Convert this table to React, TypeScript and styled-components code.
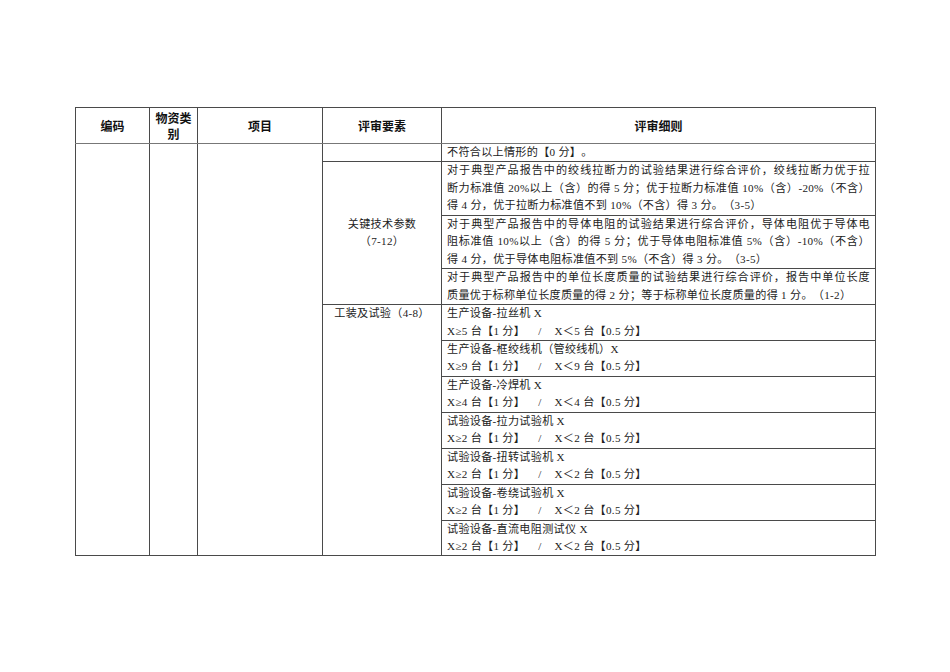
import { createGlobalStyle, styled } from "styled-components";

const GlobalStyle = createGlobalStyle`
  html, body {
    margin: 0;
    padding: 0;
    background: #fff;
  }
`;

const Page = styled.div`
  width: 950px;
  height: 672px;
  padding: 107px 0 0 75px;
  box-sizing: border-box;
  background: #fff;
`;

const Sheet = styled.table`
  width: 800px;
  table-layout: fixed;
  border-collapse: collapse;
  font-family: "Liberation Serif", "Noto Sans CJK SC", serif;
  font-size: 11.1px;
  letter-spacing: 0.3px;
  text-spacing-trim: space-all;
  color: #222;
`;

const HeadRow = styled.tr`
  height: 36px;
`;

const HeadCell = styled.th`
  border: 1px solid #4a4a4a;
  border-bottom-color: #777;
  padding: 1px 4px;
  font-family: "Noto Sans CJK SC", "Liberation Sans", sans-serif;
  font-size: 12px;
  font-weight: 700;
  letter-spacing: 0;
  line-height: 16px;
  text-align: center;
  vertical-align: middle;
  color: #111;
`;

const Cell = styled.td<{ $align?: "top" | "middle" }>`
  border: 1px solid #4a4a4a;
  padding: 0 5px;
  line-height: 17.45px;
  vertical-align: ${(p) => p.$align ?? "middle"};
  white-space: nowrap;
`;

const Element = styled(Cell)`
  text-align: center;
  padding: 0 2px;
`;

const Line = styled.div<{ $full?: boolean }>`
  text-align: ${(p) => (p.$full ? "justify" : "left")};
  text-align-last: ${(p) => (p.$full ? "justify" : "left")};
  white-space: nowrap;
`;

const Gap = styled.span`
  display: inline-block;
  width: 13px;
`;

const details: { lines: string[]; full: number }[] = [
  {
    lines: [
      "对于典型产品报告中的绞线拉断力的试验结果进行综合评价，绞线拉断力优于拉",
      "断力标准值 20%以上（含）的得 5 分；优于拉断力标准值 10%（含）-20%（不含）",
      "得 4 分，优于拉断力标准值不到 10%（不含）得 3 分。（3-5）",
    ],
    full: 2,
  },
  {
    lines: [
      "对于典型产品报告中的导体电阻的试验结果进行综合评价，导体电阻优于导体电",
      "阻标准值 10%以上（含）的得 5 分；优于导体电阻标准值 5%（含）-10%（不含）",
      "得 4 分，优于导体电阻标准值不到 5%（不含）得 3 分。（3-5）",
    ],
    full: 2,
  },
  {
    lines: [
      "对于典型产品报告中的单位长度质量的试验结果进行综合评价，报告中单位长度",
      "质量优于标称单位长度质量的得 2 分；等于标称单位长度质量的得 1 分。（1-2）",
    ],
    full: 1,
  },
];

const equipment: { name: string; n: number }[] = [
  { name: "生产设备-拉丝机 X", n: 5 },
  { name: "生产设备-框绞线机（管绞线机）X", n: 9 },
  { name: "生产设备-冷焊机 X", n: 4 },
  { name: "试验设备-拉力试验机 X", n: 2 },
  { name: "试验设备-扭转试验机 X", n: 2 },
  { name: "试验设备-卷绕试验机 X", n: 2 },
  { name: "试验设备-直流电阻测试仪 X", n: 2 },
];

function Paragraph({ lines, full }: { lines: string[]; full: number }) {
  return (
    <>
      {lines.map((l, i) => (
        <Line key={i} $full={i < full}>
          {l}
        </Line>
      ))}
    </>
  );
}

export default function App() {
  return (
    <Page>
      <GlobalStyle />
      <Sheet>
        <colgroup>
          <col style={{ width: 74 }} />
          <col style={{ width: 48 }} />
          <col style={{ width: 125 }} />
          <col style={{ width: 119 }} />
          <col style={{ width: 434 }} />
        </colgroup>
        <thead>
          <HeadRow>
            <HeadCell>编码</HeadCell>
            <HeadCell>
              物资类
              <br />别
            </HeadCell>
            <HeadCell>项目</HeadCell>
            <HeadCell>评审要素</HeadCell>
            <HeadCell>评审细则</HeadCell>
          </HeadRow>
        </thead>
        <tbody>
          <tr>
            <Cell rowSpan={11} />
            <Cell rowSpan={11} />
            <Cell rowSpan={11} />
            <Cell />
            <Cell>
              <Line>不符合以上情形的【0 分】。</Line>
            </Cell>
          </tr>
          {details.map((d, i) => (
            <tr key={i}>
              {i === 0 && (
                <Element rowSpan={3}>
                  关键技术参数
                  <br />
                  （7-12）
                </Element>
              )}
              <Cell>
                <Paragraph lines={d.lines} full={d.full} />
              </Cell>
            </tr>
          ))}
          {equipment.map((e, i) => (
            <tr key={e.name}>
              {i === 0 && (
                <Element rowSpan={7} $align="top">
                  工装及试验（4-8）
                </Element>
              )}
              <Cell>
                <Line>{e.name}</Line>
                <Line>
                  X≥{e.n} 台【1 分】
                  <Gap />/<Gap />
                  X＜{e.n} 台【0.5 分】
                </Line>
              </Cell>
            </tr>
          ))}
        </tbody>
      </Sheet>
    </Page>
  );
}
